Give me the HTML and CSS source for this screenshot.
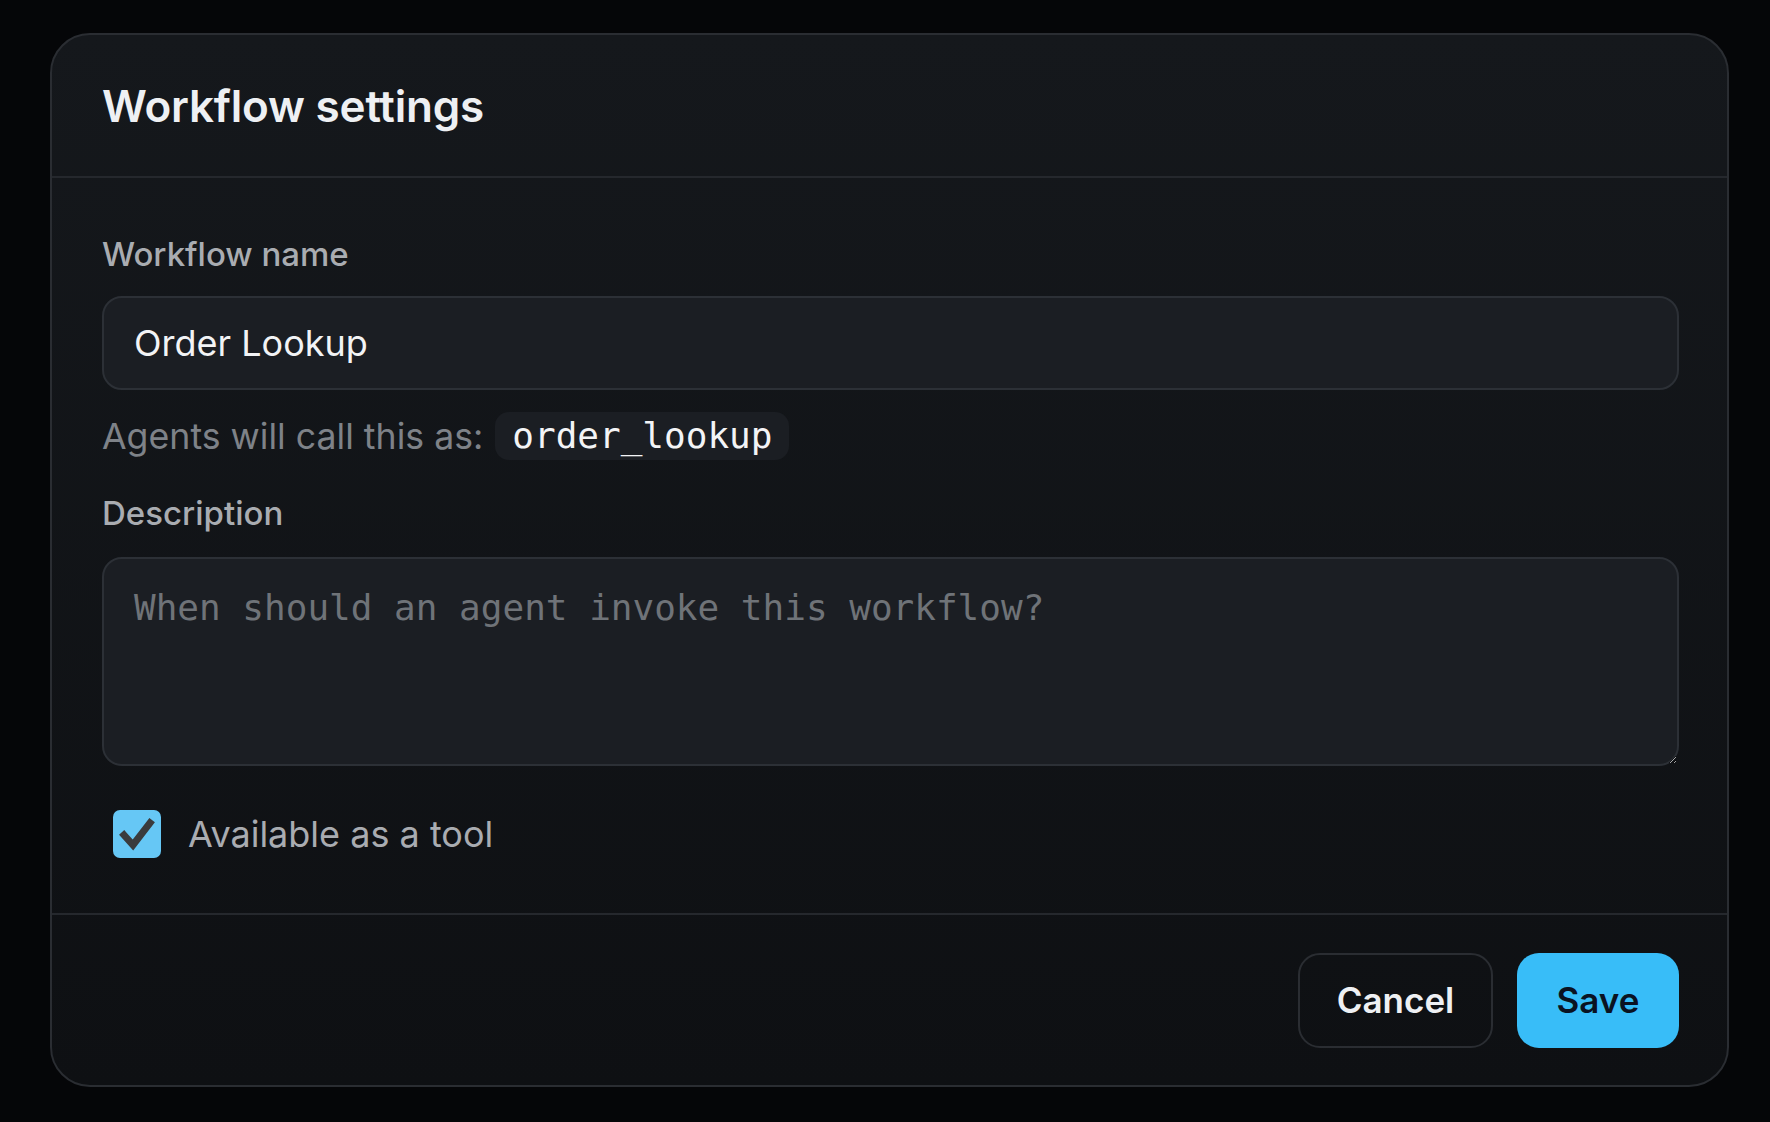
FILE: index.html
```html
<!DOCTYPE html>
<html lang="en">
<head>
  <meta charset="UTF-8">
  <title>Workflow settings</title>
  <link rel="stylesheet" href="styles.css">
</head>
<body>
  <div class="dialog">
    <header class="dialog-header">
      <h1>Workflow settings</h1>
    </header>

    <div class="dialog-body">
      <label class="field-label" for="wf-name">Workflow name</label>
      <input type="text" id="wf-name" class="text-input" value="Order Lookup">
      <p class="hint">Agents will call this as: <code class="tool-id">order_lookup</code></p>

      <label class="field-label" for="wf-desc">Description</label>
      <textarea id="wf-desc" class="text-area" placeholder="When should an agent invoke this workflow?"></textarea>

      <label class="check-row">
        <span class="check-box">
          <svg viewBox="0 0 48 48" width="48" height="48">
            <polyline points="11,25 20,35 37,13" fill="none" stroke="#3a3b3d" stroke-width="7" stroke-linecap="square"/>
          </svg>
        </span>
        <span class="check-text">Available as a tool</span>
      </label>
    </div>

    <footer class="dialog-footer">
      <button class="btn btn-cancel">Cancel</button>
      <button class="btn btn-save">Save</button>
    </footer>
  </div>
</body>
</html>
```

FILE: styles.css
```css
html, body {
  height: 100%;
}

body {
  margin: 0;
  background-color: #050608;
  font-family: Inter, "Noto Sans", sans-serif;
  color-scheme: dark;
  padding: 33px 41px 35px 50px;
  box-sizing: border-box;
}

.dialog {
  height: 100%;
  box-sizing: border-box;
  border: 2px solid #2a2d32;
  border-radius: 40px;
  background: linear-gradient(#15181c, #0e1013);
  display: flex;
  flex-direction: column;
  overflow: hidden;
}

.dialog-header {
  height: 143px;
  box-sizing: border-box;
  padding: 0 50px;
  display: flex;
  align-items: center;
  border-bottom: 2px solid #25282d;
}

h1 {
  margin: 0;
  font-size: 44px;
  font-weight: 600;
  color: #eef0f3;
  letter-spacing: -0.2px;
}

.dialog-body {
  flex: 1;
  padding: 56px 48px 0 50px;
  display: flex;
  flex-direction: column;
  border-bottom: 2px solid #25282d;
}

.field-label {
  font-size: 33px;
  font-weight: 500;
  color: #a9acb1;
  line-height: 40px;
}

.text-input,
.text-area {
  display: block;
  width: 100%;
  box-sizing: border-box;
  background-color: #1b1e23;
  border: 2px solid #2c3036;
  border-radius: 20px;
  color: #f2f3f5;
  outline: none;
}

.text-input {
  height: 94px;
  margin-top: 22px;
  padding: 0 30px;
  font-family: Inter, "Noto Sans", sans-serif;
  font-size: 36px;
}

.hint {
  margin: 22px 0 33px 0;
  display: flex;
  align-items: center;
  gap: 12px;
  font-size: 35.7px;
  color: #7e8288;
  line-height: 48px;
}

.tool-id {
  font-family: "DejaVu Sans Mono", monospace;
  font-size: 36px;
  color: #f3f4f6;
  background-color: #1b1e23;
  border-radius: 14px;
  padding: 0 17px;
  line-height: 48px;
}

.text-area {
  height: 209px;
  margin-top: 24px;
  padding: 28px 30px;
  font-family: "DejaVu Sans Mono", monospace;
  font-size: 36px;
  resize: vertical;
}

.text-area::placeholder {
  color: #6f7378;
}

.check-row {
  display: flex;
  align-items: center;
  gap: 27px;
  margin: 44px 0 0 11px;
}

.check-box {
  width: 48px;
  height: 48px;
  border-radius: 7px;
  background-color: #66c7f5;
  display: block;
}

.check-box svg {
  display: block;
}

.check-text {
  font-size: 36px;
  color: #a9acb1;
}

.dialog-footer {
  height: 170px;
  box-sizing: border-box;
  padding: 0 48px;
  display: flex;
  justify-content: flex-end;
  align-items: center;
  gap: 24px;
}

.btn {
  height: 95px;
  border-radius: 22px;
  font-family: Inter, "Noto Sans", sans-serif;
  font-size: 35px;
  font-weight: 600;
  cursor: pointer;
}

.btn-cancel {
  width: 195px;
  background-color: transparent;
  border: 2px solid #2a2d32;
  color: #eef0f3;
}

.btn-save {
  width: 162px;
  background-color: #38bdf8;
  border: none;
  color: #0a1322;
}
```
